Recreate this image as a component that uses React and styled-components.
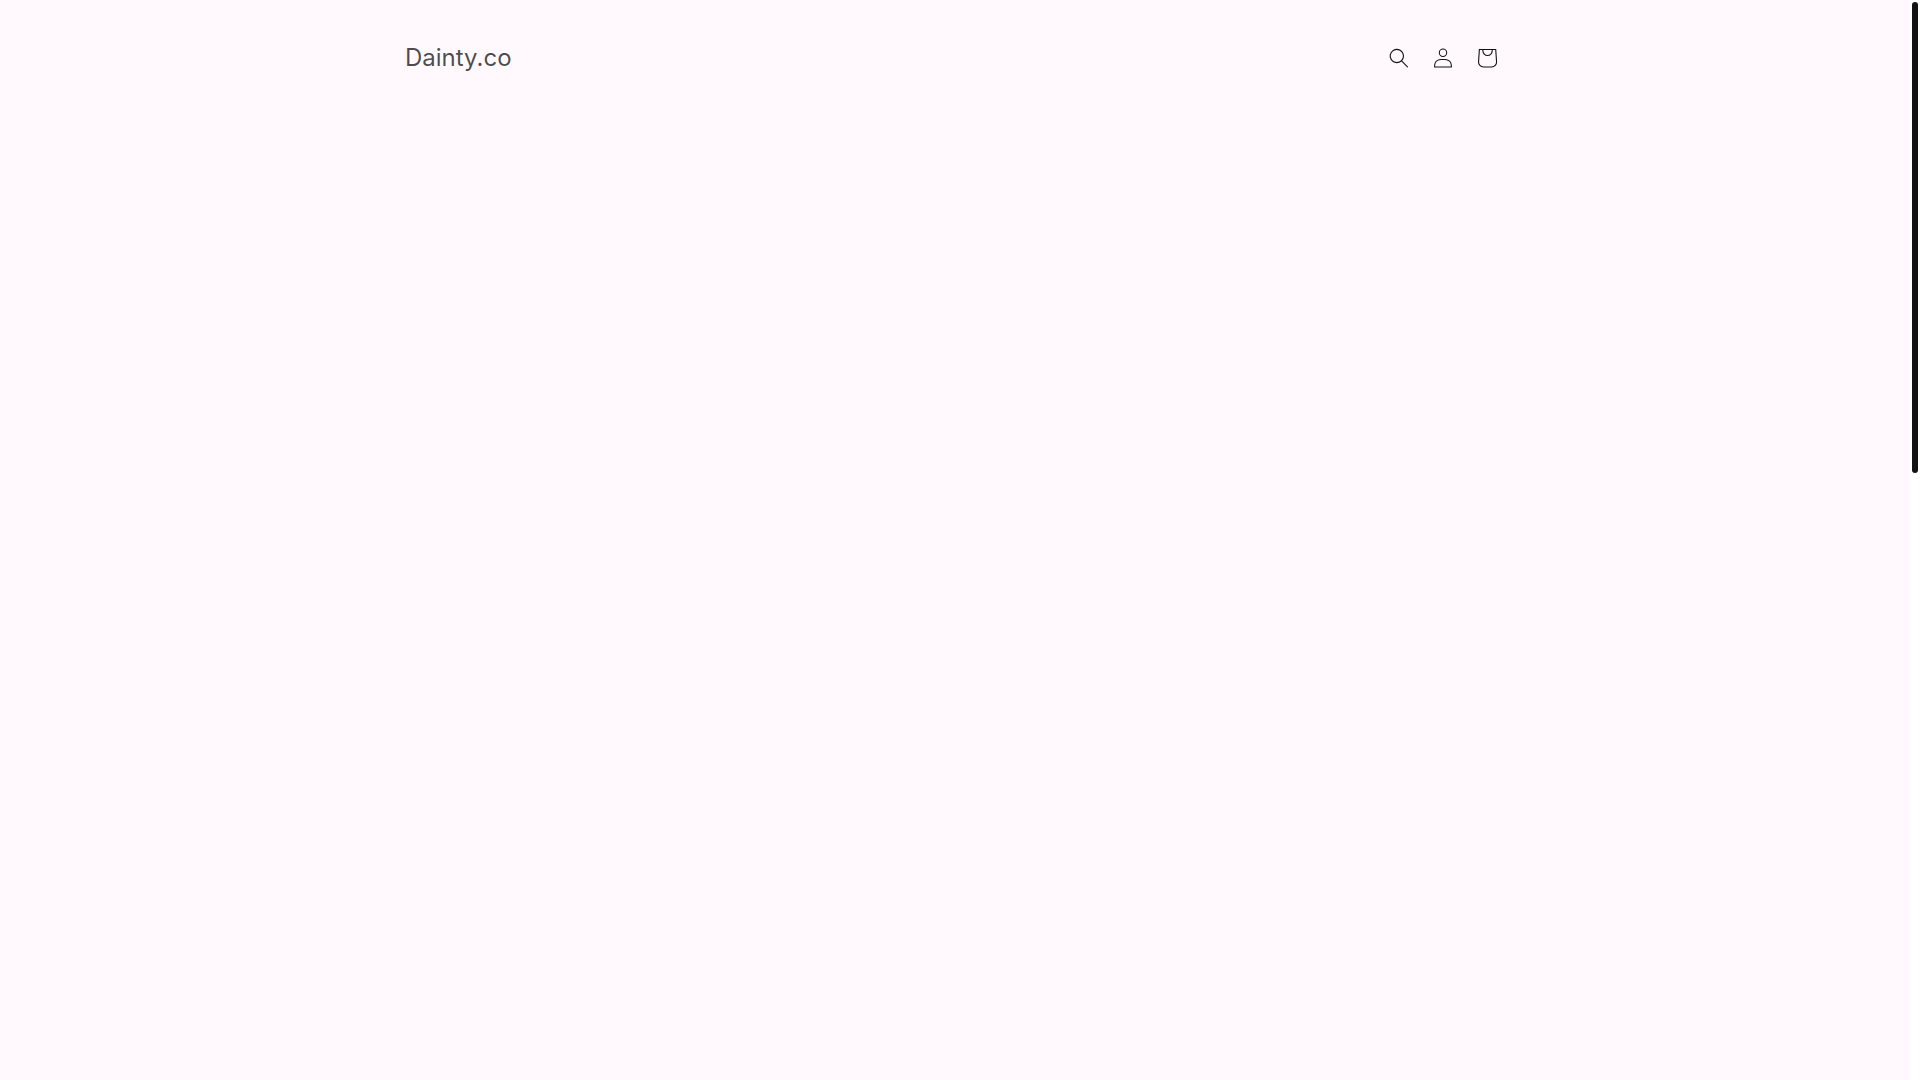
import React from 'react';
import styled, { createGlobalStyle } from 'styled-components';

const GlobalStyle = createGlobalStyle`
  * {
    box-sizing: border-box;
  }
  body {
    margin: 0;
    background-color: #ffffff;
    font-family: Inter, 'Liberation Sans', sans-serif;
    color: #121212;
  }
`;

const Layout = styled.div`
  display: flex;
  height: 100vh;
`;

const Page = styled.div`
  flex: 1;
  background-color: #fff9fd;
`;

const Header = styled.header`
  display: flex;
  align-items: center;
  justify-content: space-between;
  max-width: 1200px;
  margin: 0 auto;
  padding: 36px 46px 36px 50px;
`;

const Title = styled.h1`
  margin: 0;
  font-size: 24px;
  line-height: 32px;
  font-weight: 400;
`;

const TitleLink = styled.a`
  color: rgba(18, 18, 18, 0.75);
  text-decoration: none;
`;

const Icons = styled.nav`
  display: flex;
`;

const iconBox = `
  display: flex;
  align-items: center;
  justify-content: center;
  width: 44px;
  height: 44px;
  padding: 0;
  border: none;
  background-color: transparent;
  color: #121212;
  cursor: pointer;
`;

const IconButton = styled.button`
  ${iconBox}
`;

const IconLink = styled.a`
  ${iconBox}
`;

const Icon = styled.svg`
  flex: none;
  width: ${(props) => props.$size}px;
  height: ${(props) => props.$size}px;
  fill: currentColor;
`;

const ScrollTrack = styled.div`
  width: 10px;
  padding: 2px;
  background-color: #ffffff;
`;

const ScrollThumb = styled.div`
  height: 43.8%;
  border-radius: 3px;
  background-color: #121212;
`;

const App = () => (
  <Layout>
    <GlobalStyle />
    <Page>
      <Header>
        <Title>
          <TitleLink href="/">Dainty.co</TitleLink>
        </Title>
        <Icons>
          <IconButton type="button" aria-label="Search">
            <Icon $size={20} viewBox="0 0 18 19" aria-hidden="true">
              <path
                fillRule="evenodd"
                clipRule="evenodd"
                d="M11.03 11.68A5.784 5.784 0 112.85 3.5a5.784 5.784 0 018.18 8.18zm.26 1.12a6.78 6.78 0 11.72-.7l5.4 5.4a.5.5 0 11-.71.7l-5.41-5.4z"
              />
            </Icon>
          </IconButton>
          <IconLink href="/account" aria-label="Log in">
            <Icon $size={20} viewBox="0 0 18 19" aria-hidden="true">
              <path
                fillRule="evenodd"
                clipRule="evenodd"
                d="M6 4.5a3 3 0 116 0 3 3 0 01-6 0zm3-4a4 4 0 100 8 4 4 0 000-8zm5.58 12.15c1.12.83 1.83 2.24 1.92 4.85H1.5c.1-2.6.8-4.02 1.92-4.85C4.66 11.75 6.5 11.5 9 11.5s4.35.26 5.58 1.15zM9 10.5c-2.5 0-4.65.24-6.17 1.35C1.27 12.98.5 14.93.5 18v.5h17V18c0-3.07-.77-5.02-2.33-6.15-1.52-1.1-3.67-1.35-6.17-1.35z"
              />
            </Icon>
          </IconLink>
          <IconLink href="/cart" aria-label="Cart">
            <Icon $size={44} viewBox="0 0 40 40" aria-hidden="true">
              <path
                fillRule="evenodd"
                d="M15.75 11.8h-3.16l-.77 11.6a5 5 0 0 0 4.99 5.34h7.38a5 5 0 0 0 4.99-5.33l-.78-11.61zm0 1h-2.22l-.71 10.67a4 4 0 0 0 3.99 4.27h7.38a4 4 0 0 0 4-4.27l-.72-10.67h-2.22v.63a4.75 4.75 0 1 1-9.5 0zm8.5 0h-7.5v.63a3.75 3.75 0 1 0 7.5 0z"
              />
            </Icon>
          </IconLink>
        </Icons>
      </Header>
    </Page>
    <ScrollTrack>
      <ScrollThumb />
    </ScrollTrack>
  </Layout>
);

export default App;
